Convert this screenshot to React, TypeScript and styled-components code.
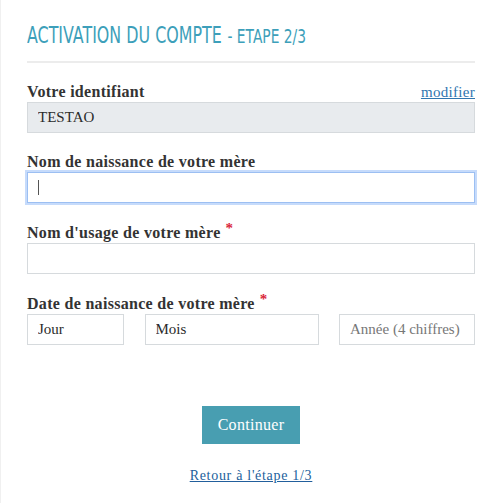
import React from "react";
import styled, { createGlobalStyle } from "styled-components";

const Global = createGlobalStyle`
  html, body { margin: 0; padding: 0; background: #ffffff; }
  body { font-family: "Liberation Serif", serif; }
  * { box-sizing: border-box; }
`;

const Page = styled.div`
  width: 500px;
  height: 503px;
  border-left: 1px solid #f0f0f0;
  padding: 22px 25px 0 26px;
  display: flex;
  flex-direction: column;
`;

const Title = styled.h1`
  margin: 0;
  font-family: "DejaVu Sans", sans-serif;
  font-weight: 400;
  font-size: 23px;
  line-height: 26px;
  color: #3d9fba;
  white-space: nowrap;
  transform: scaleX(0.69);
  transform-origin: left center;
`;

const Step = styled.span`
  font-size: 20px;
  margin-left: 1px;
`;

const Divider = styled.hr`
  margin: 12px 0 0 0;
  border: none;
  height: 2px;
  background: #ececec;
`;

const Form = styled.form`
  display: flex;
  flex-direction: column;
  margin-top: 19px;
`;

const Field = styled.div<{ $space: number }>`
  display: flex;
  flex-direction: column;
  margin-bottom: ${(p) => p.$space}px;
`;

const LabelRow = styled.div`
  display: flex;
  justify-content: space-between;
  align-items: flex-end;
  height: 19px;
  margin-bottom: 1px;
`;

const Label = styled.label`
  font-family: "Liberation Serif", serif;
  font-weight: 700;
  font-size: 16px;
  line-height: 19px;
  color: #333333;
  letter-spacing: 0.3px;
`;

const Required = styled.sup`
  color: #d9253a;
  font-size: 15px;
  margin-left: 5px;
  vertical-align: 5px;
  line-height: 0;
`;

const EditLink = styled.a`
  font-family: "Liberation Serif", serif;
  font-size: 15px;
  line-height: 17px;
  color: #2f76b0;
  text-decoration: underline;
  letter-spacing: 0.3px;
`;

const Input = styled.input<{ $readonly?: boolean; $focused?: boolean }>`
  display: block;
  width: 100%;
  height: 31px;
  margin: 0;
  padding: 0 10px;
  font-family: "Liberation Serif", serif;
  font-size: 15px;
  color: #2b2b2b;
  background: ${(p) => (p.$readonly ? "#e8ebee" : "#ffffff")};
  border: 1px solid ${(p) => (p.$focused ? "#9cbff2" : "#d6dadd")};
  box-shadow: ${(p) => (p.$focused ? "0 0 0 2px #c6dbfb" : "none")};
  outline: none;
  border-radius: 0;
  &::placeholder {
    color: #2b2b2b;
  }
`;

const FocusBox = styled.div`
  position: relative;
`;

const Caret = styled.span`
  position: absolute;
  left: 11px;
  top: 8px;
  width: 1px;
  height: 15px;
  background: #555;
`;

const DateRow = styled.div`
  display: grid;
  grid-template-columns: 97px 174px 136px;
  justify-content: space-between;
`;

const YearInput = styled(Input)`
  &::placeholder {
    color: #777777;
  }
`;

const Actions = styled.div`
  display: flex;
  flex-direction: column;
  align-items: center;
  margin-top: 41px;
`;

const Button = styled.button`
  width: 98px;
  height: 38px;
  border: none;
  background: #489eb1;
  color: #ffffff;
  font-family: "Liberation Serif", serif;
  font-size: 16px;
  letter-spacing: 0.3px;
  cursor: pointer;
`;

const BackLink = styled.a`
  margin-top: 24px;
  font-family: "Liberation Serif", serif;
  font-size: 14px;
  color: #225f9c;
  text-decoration: underline;
  letter-spacing: 0.7px;
`;

export default function App() {
  return (
    <>
      <Global />
      <Page>
        <Title>
          ACTIVATION DU COMPTE <Step>- ETAPE 2/3</Step>
        </Title>
        <Divider />
        <Form onSubmit={(e) => e.preventDefault()}>
          <Field $space={19}>
            <LabelRow>
              <Label>Votre identifiant</Label>
              <EditLink href="#">modifier</EditLink>
            </LabelRow>
            <Input $readonly readOnly value="TESTAO" />
          </Field>
          <Field $space={20}>
            <LabelRow>
              <Label>Nom de naissance de votre mère</Label>
            </LabelRow>
            <FocusBox>
              <Input $focused />
              <Caret />
            </FocusBox>
          </Field>
          <Field $space={20}>
            <LabelRow>
              <Label>
                Nom d'usage de votre mère<Required>*</Required>
              </Label>
            </LabelRow>
            <Input />
          </Field>
          <Field $space={20}>
            <LabelRow>
              <Label>
                Date de naissance de votre mère<Required>*</Required>
              </Label>
            </LabelRow>
            <DateRow>
              <Input placeholder="Jour" />
              <Input placeholder="Mois" />
              <YearInput placeholder="Année (4 chiffres)" />
            </DateRow>
          </Field>
        </Form>
        <Actions>
          <Button type="button">Continuer</Button>
          <BackLink href="#">Retour à l'étape 1/3</BackLink>
        </Actions>
      </Page>
    </>
  );
}
